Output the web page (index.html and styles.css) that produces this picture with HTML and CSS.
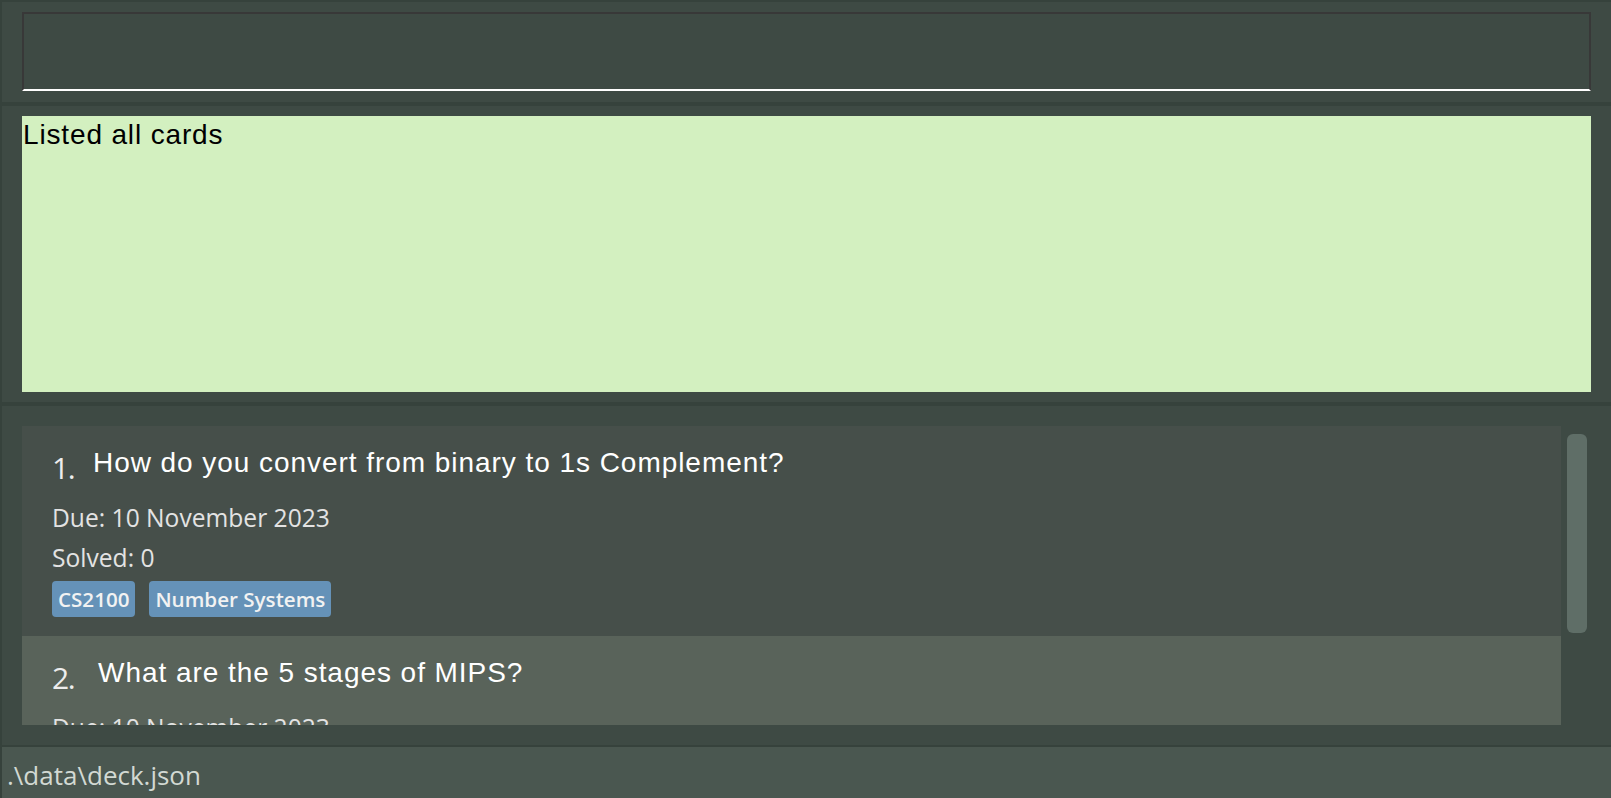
FILE: index.html
```html
<!DOCTYPE html>
<html lang="en">
<head>
<meta charset="utf-8">
<title>Deck</title>
<link rel="stylesheet" href="styles.css">
</head>
<body>
<div class="app">
  <section class="command-pane">
    <div class="command-box"></div>
  </section>
  <section class="result-pane">
    <div class="result-box">Listed all cards</div>
  </section>
  <section class="list-pane">
    <div class="list-viewport">
      <div class="cards">
        <div class="card card-odd">
          <div class="card-head">
            <span class="card-index">1.</span>
            <span class="card-question">How do you convert from binary to 1s Complement?</span>
          </div>
          <div class="card-line">Due: 10 November 2023</div>
          <div class="card-line">Solved: 0</div>
          <div class="tags">
            <span class="tag">CS2100</span>
            <span class="tag">Number Systems</span>
          </div>
        </div>
        <div class="card card-even">
          <div class="card-head">
            <span class="card-index">2.</span>
            <span class="card-question card-question-wide">What are the 5 stages of MIPS?</span>
          </div>
          <div class="card-line">Due: 10 November 2023</div>
        </div>
      </div>
    </div>
    <div class="scrollbar"><div class="scroll-thumb"></div></div>
  </section>
  <footer class="status-bar">.\data\deck.json</footer>
</div>
</body>
</html>
```
FILE: styles.css
```css
html, body {
  margin: 0;
  padding: 0;
  background: #3e4a44;
}

.app {
  width: 1611px;
  height: 798px;
  box-sizing: border-box;
  border-top: 2px solid #36423c;
  border-left: 2px solid #36423c;
  display: flex;
  flex-direction: column;
  background: #3e4a44;
  overflow: hidden;
}

.command-pane {
  height: 104px;
  box-sizing: border-box;
  padding: 10px 20px 0 20px;
  border-bottom: 4px solid #36423c;
  flex: none;
}

.command-box {
  height: 79px;
  box-sizing: border-box;
  background: #3e4a44;
  border: 2px solid #383838;
  border-bottom: 2px solid #ffffff;
}

.result-pane {
  height: 300px;
  box-sizing: border-box;
  padding: 10px 20px;
  border-bottom: 4px solid #36423c;
  flex: none;
}

.result-box {
  height: 276px;
  background: #d3f0c0;
  color: #000000;
  font-family: "Liberation Sans", Arial, sans-serif;
  font-size: 28px;
  letter-spacing: 0.85px;
  line-height: 34px;
  padding: 2px 0 0 1px;
  box-sizing: border-box;
}

.list-pane {
  height: 339px;
  box-sizing: border-box;
  padding: 20px 0 20px 20px;
  display: flex;
  flex: none;
}

.list-viewport {
  width: 1539px;
  height: 299px;
  overflow: hidden;
  flex: none;
}

.card {
  box-sizing: border-box;
  padding: 20px 0 19px 30px;
}

.card-odd {
  background: #464f4a;
}

.card-even {
  background: #59635a;
}

.card-head {
  height: 52px;
  display: flex;
  align-items: flex-start;
}

.card-index {
  font-family: "Open Sans", sans-serif;
  font-size: 30px;
  letter-spacing: -1.5px;
  line-height: 34px;
  margin-top: 5px;
  color: #ededed;
  width: 41px;
  flex: none;
}

.card-question-wide {
  margin-left: 5px;
}

.card-question {
  font-family: "Liberation Sans", Arial, sans-serif;
  font-size: 28px;
  letter-spacing: 0.95px;
  line-height: 34px;
  color: #ffffff;
}

.card-line {
  font-family: "Open Sans", sans-serif;
  font-size: 24.6px;
  line-height: 40px;
  color: #e3e3e3;
}

.tags {
  margin-top: 3px;
  display: flex;
  gap: 14px;
}

.tag {
  height: 36px;
  box-sizing: border-box;
  padding: 0 6px;
  background: #6592b8;
  border-radius: 4px;
  color: #f2f2f2;
  font-family: "Open Sans", sans-serif;
  font-weight: 600;
  font-size: 20.6px;
  line-height: 36px;
}

.scrollbar {
  width: 50px;
  flex: none;
  box-sizing: border-box;
  padding: 8px 0 0 6px;
}

.scroll-thumb {
  width: 20px;
  height: 199px;
  background: #5f6e67;
  border-radius: 6px;
}

.status-bar {
  flex: 1;
  border-top: 2px solid #36423c;
  background: #4a5750;
  color: #d2d9d3;
  font-family: "Open Sans", sans-serif;
  font-size: 26px;
  line-height: 45px;
  padding: 6px 0 0 7px;
  margin-left: -2px;
  overflow: hidden;
}
```
